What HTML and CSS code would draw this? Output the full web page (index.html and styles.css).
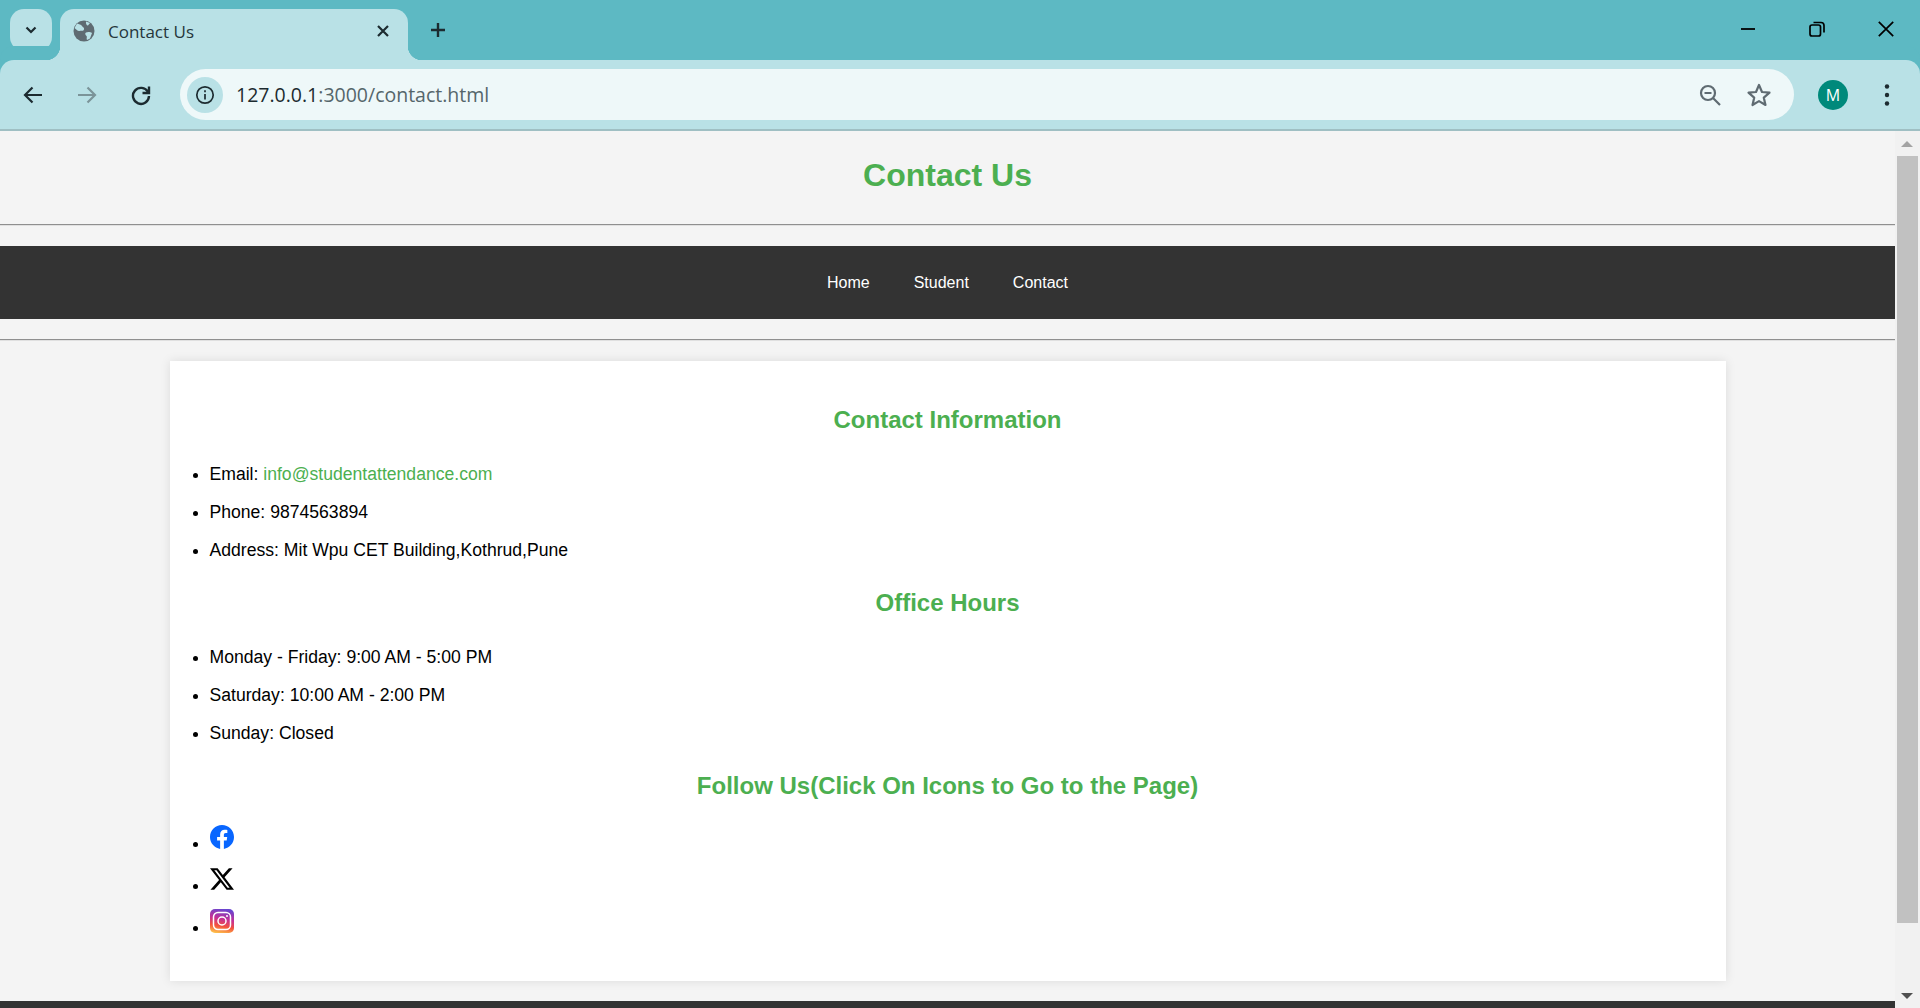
FILE: index.html
```html
<!DOCTYPE html>
<html lang="en">
<head>
    <meta charset="UTF-8">
    <meta name="viewport" content="width=device-width, initial-scale=1.0">
    <title>Contact Us</title>
    <link rel="stylesheet" href="styles.css">
</head>
<body>
    <div class="tabstrip">
        <div class="tab-search">
            <svg width="14" height="14" viewBox="0 0 14 14"><path d="M2.5 4.5 7 9l4.5-4.5" fill="none" stroke="#1c2b30" stroke-width="2.2"/></svg>
        </div>
        <div class="tab">
            <svg class="tab-globe" width="22" height="22" viewBox="0 0 22 22">
                <circle cx="11" cy="11" r="10.5" fill="#5f6b72"/>
                <path d="M4 3.5c2 .5 4 1 5 2.500s2.500 1.500 2 3.500-3 1-4.500 1.500S2.500 9 1.500 8zM13 12.500c2-1 4.500-.5 6 .5l-2 5.500-3 1.500c-1-1.500.5-3-.5-4s-2-2.500-.5-3.500zM13 1.500l4 1.500-2 2.500c-1 .5-2.500-2-2-4z" fill="#b9e1e6"/>
            </svg>
            <span class="tab-title">Contact Us</span>
            <svg class="tab-close" width="14" height="14" viewBox="0 0 14 14"><path d="M2 2l10 10M12 2 2 12" stroke="#1c2b30" stroke-width="2.2"/></svg>
        </div>
        <svg class="new-tab" width="18" height="18" viewBox="0 0 18 18"><path d="M9 2v14M2 9h14" stroke="#1c2b30" stroke-width="2.400"/></svg>
        <div class="window-controls">
            <svg width="16" height="16" viewBox="0 0 16 16"><path d="M1 8h14" stroke="#000" stroke-width="1.800"/></svg>
            <svg width="16" height="16" viewBox="0 0 16 16" fill="none" stroke="#000" stroke-width="1.700"><rect x="1" y="4" width="10.500" height="11" rx="2"/><path d="M4.500 1.500h7.500a3 3 0 0 1 3 3v7"/></svg>
            <svg width="16" height="16" viewBox="0 0 16 16"><path d="M.8.8l14.400 14.400M15.200.8.8 15.200" stroke="#000" stroke-width="1.700"/></svg>
        </div>
    </div>

    <div class="toolbar">
        <svg class="nav-btn" width="22" height="22" viewBox="0 0 22 22" fill="none" stroke="#1c2b30" stroke-width="2.200"><path d="M20 11H3M10.500 3.500 3 11l7.500 7.500"/></svg>
        <svg class="nav-btn" width="22" height="22" viewBox="0 0 22 22" fill="none" stroke="#7b9499" stroke-width="2.200"><path d="M2 11h17M11.500 3.500 19 11l-7.500 7.500"/></svg>
        <svg class="nav-btn" width="22" height="22" viewBox="0 0 22 22" fill="none" stroke="#1c2b30" stroke-width="2.400"><path d="M18 8a8 8 0 1 0 1 4"/><path d="M19 2.500V9h-6.500" /></svg>
        <div class="urlbar">
            <span class="site-info">
                <svg width="20" height="20" viewBox="0 0 20 20" fill="none" stroke="#1c2b30" stroke-width="1.700"><circle cx="10" cy="10" r="8.200"/><path d="M10 9v5.500M10 5.300v1.900"/></svg>
            </span>
            <span class="url"><span class="url-host">127.0.0.1</span>:3000/contact.html</span>
            <svg class="url-icon" width="24" height="24" viewBox="0 0 24 24" fill="none" stroke="#5f6b72" stroke-width="2.200"><circle cx="10" cy="10" r="7"/><path d="M15 15l7 7M6.500 10h7"/></svg>
            <svg class="url-icon" width="26" height="26" viewBox="0 0 26 26" fill="none" stroke="#5f6b72" stroke-width="2.200" stroke-linejoin="round"><path d="M13 3l3 7 7.500.7-5.700 5 1.700 7.300-6.500-3.900L6.500 23l1.700-7.300-5.700-5L10 10z"/></svg>
        </div>
        <div class="avatar">M</div>
        <svg class="menu-dots" width="6" height="24" viewBox="0 0 6 24" fill="#1c2b30"><circle cx="3" cy="3.500" r="2.200"/><circle cx="3" cy="12" r="2.200"/><circle cx="3" cy="20.500" r="2.200"/></svg>
    </div>

    <div class="viewport">
        <div class="page">
            <header class="site-header">
                <h1>Contact Us</h1>
            </header>
            <hr>
            <nav class="site-nav">
                <a href="#">Home</a>
                <a href="#">Student</a>
                <a href="#">Contact</a>
            </nav>
            <hr>
            <main class="card">
                <h2>Contact Information</h2>
                <ul class="info-list">
                    <li>Email: <a href="#">info@studentattendance.com</a></li>
                    <li>Phone: 9874563894</li>
                    <li>Address: Mit Wpu CET Building,Kothrud,Pune</li>
                </ul>
                <h2>Office Hours</h2>
                <ul class="info-list">
                    <li>Monday - Friday: 9:00 AM - 5:00 PM</li>
                    <li>Saturday: 10:00 AM - 2:00 PM</li>
                    <li>Sunday: Closed</li>
                </ul>
                <h2>Follow Us(Click On Icons to Go to the Page)</h2>
                <ul class="social-list">
                    <li>
                        <svg width="24" height="24" viewBox="0 0 24 24"><path fill="#0866ff" d="M24 12.073c0-6.627-5.373-12-12-12s-12 5.373-12 12c0 5.990 4.388 10.954 10.125 11.854v-8.385H7.078v-3.470h3.047V9.430c0-3.007 1.792-4.669 4.533-4.669 1.312 0 2.686.235 2.686.235v2.953H15.830c-1.491 0-1.956.925-1.956 1.874v2.250h3.328l-.532 3.470h-2.796v8.385C19.612 23.027 24 18.062 24 12.073z"/></svg>
                    </li>
                    <li>
                        <svg width="24" height="24" viewBox="0 0 24 24"><path fill="#000" d="M18.901 1.153h3.680l-8.040 9.190L24 22.846h-7.406l-5.800-7.584-6.638 7.584H.474l8.600-9.830L0 1.154h7.594l5.243 6.932ZM17.610 20.644h2.039L6.486 3.240H4.298Z"/></svg>
                    </li>
                    <li>
                        <svg width="24" height="24" viewBox="0 0 24 24">
                            <defs>
                                <linearGradient id="igGrad" x1="0.3" y1="1" x2="0.5" y2="0">
                                    <stop offset="0" stop-color="#fdc14b"/>
                                    <stop offset="0.3" stop-color="#f4533c"/>
                                    <stop offset="0.6" stop-color="#c62f95"/>
                                    <stop offset="1" stop-color="#6a45cf"/>
                                </linearGradient>
                            </defs>
                            <rect width="24" height="24" rx="5" fill="url(#igGrad)"/>
                            <rect x="3.500" y="3.500" width="17" height="17" rx="4.500" fill="none" stroke="#fff" stroke-width="1.500"/>
                            <circle cx="12" cy="12" r="4" fill="none" stroke="#fff" stroke-width="1.500"/>
                            <circle cx="17" cy="7" r="1" fill="#fff"/>
                        </svg>
                    </li>
                </ul>
            </main>
            <footer class="site-footer"></footer>
        </div>
        <div class="scrollbar">
            <span class="arrow-up"></span>
            <div class="thumb"></div>
            <span class="arrow-down"></span>
        </div>
    </div>
</body>
</html>
```

FILE: styles.css
```css
* {
    box-sizing: border-box;
}
html, body {
    height: 100%;
}
body {
    margin: 0;
    display: flex;
    flex-direction: column;
    overflow: hidden;
    font-family: "Liberation Sans", Arial, sans-serif;
    background-color: #f4f4f4;
}

/* browser tabs */
.tabstrip {
    height: 60px;
    flex: none;
    display: flex;
    align-items: flex-start;
    background-color: #5db9c3;
    padding: 9px 0 0 10px;
}
.tab-search {
    width: 42px;
    height: 42px;
    border-radius: 14px;
    background-color: #b9e1e6;
    display: flex;
    align-items: center;
    justify-content: center;
}
.tab {
    position: relative;
    width: 348px;
    height: 51px;
    margin-left: 8px;
    padding: 0 18px 7px 13px;
    border-radius: 14px 14px 0 0;
    background-color: #b9e1e6;
    display: flex;
    align-items: center;
}
.tab::before, .tab::after {
    content: "";
    position: absolute;
    bottom: 0;
    width: 14px;
    height: 14px;
}
.tab::before {
    left: -14px;
    background: radial-gradient(circle at 0 0, transparent 14px, #b9e1e6 14.5px);
}
.tab::after {
    right: -14px;
    background: radial-gradient(circle at 100% 0, transparent 14px, #b9e1e6 14.5px);
}
.tab-title {
    flex: 1;
    margin-left: 13px;
    font-family: "Open Sans", sans-serif;
    font-size: 17px;
    color: #26363b;
}
.new-tab {
    margin: 12px 0 0 21px;
}
.window-controls {
    margin-left: auto;
    margin-top: 12px;
    padding-right: 26px;
    display: flex;
    gap: 53px;
}

/* address bar row */
.toolbar {
    height: 71px;
    flex: none;
    display: flex;
    align-items: center;
    padding: 0 0 0 22px;
    background-color: #b9e1e6;
    border-radius: 14px 14px 0 0;
    border-bottom: 2px solid #9fbfc3;
}
.tabstrip + .toolbar {
    box-shadow: 0 -14px 0 #5db9c3;
}
.nav-btn {
    margin-right: 32px;
}
.nav-btn:nth-child(3) {
    margin-right: 28px;
}
.urlbar {
    width: 1614px;
    height: 51px;
    display: flex;
    align-items: center;
    padding: 0 22px 0 7px;
    border-radius: 26px;
    background-color: #eef8f9;
}
.site-info {
    width: 36px;
    height: 36px;
    border-radius: 50%;
    background-color: #b9e1e6;
    display: flex;
    align-items: center;
    justify-content: center;
}
.url {
    flex: 1;
    margin-left: 13px;
    font-family: "Open Sans", sans-serif;
    font-size: 19.5px;
    color: #55666b;
}
.url-host {
    color: #1c2b30;
}
.url-icon {
    margin-left: 24px;
}
.avatar {
    width: 30px;
    height: 30px;
    margin-left: 24px;
    border-radius: 50%;
    background-color: #00897b;
    color: #fff;
    font-family: "Open Sans", sans-serif;
    font-size: 16px;
    line-height: 30px;
    text-align: center;
}
.menu-dots {
    margin-left: 36px;
}

/* the page itself */
.viewport {
    flex: 1;
    min-height: 0;
    display: flex;
}
.page {
    flex: 1;
    min-width: 0;
    overflow: hidden;
}
.site-header {
    height: 93px;
    padding-top: 26px;
    text-align: center;
}
h1 {
    margin: 0;
    font-size: 32px;
    line-height: 37px;
    color: #4caf50;
}
hr {
    margin: 0;
    height: 2px;
    border: none;
    border-top: 1px solid #8f8f8f;
    border-bottom: 1px solid #e0e0e0;
}
.site-nav {
    height: 73px;
    margin: 20px 0;
    display: flex;
    justify-content: center;
    align-items: center;
    gap: 44px;
    background-color: #333;
}
.site-nav a {
    color: #fff;
    font-size: 16px;
    text-decoration: none;
}
.card {
    width: 1556px;
    height: 620px;
    margin: 20px auto;
    padding: 45px 0 0 40px;
    background-color: #fff;
    box-shadow: 0 0 10px rgba(0, 0, 0, 0.1);
}
h2 {
    margin: 0 0 30px;
    padding-right: 40px;
    font-size: 24px;
    line-height: 28px;
    text-align: center;
    color: #4caf50;
}
ul {
    margin: 0;
    padding: 0;
}
.info-list {
    margin-bottom: 28px;
    font-size: 17.6px;
    line-height: 21px;
    color: #000;
}
.info-list li {
    margin-bottom: 17px;
}
.info-list a {
    color: #4caf50;
    text-decoration: none;
}
.social-list {
    margin-top: -5px;
}
.social-list li {
    height: 42px;
    font-size: 18px;
}
.site-footer {
    height: 60px;
    background-color: #333;
}

.scrollbar {
    position: relative;
    width: 25px;
    flex: none;
    background-color: #f1f1f1;
}
.thumb {
    position: absolute;
    top: 25px;
    left: 2px;
    right: 2px;
    height: 767px;
    background-color: #c1c1c1;
}
.arrow-up, .arrow-down {
    position: absolute;
    left: 6px;
    border-left: 6px solid transparent;
    border-right: 6px solid transparent;
}
.arrow-up {
    top: 10px;
    border-bottom: 6px solid #a3a3a3;
}
.arrow-down {
    bottom: 9px;
    border-top: 6px solid #505050;
}
```
